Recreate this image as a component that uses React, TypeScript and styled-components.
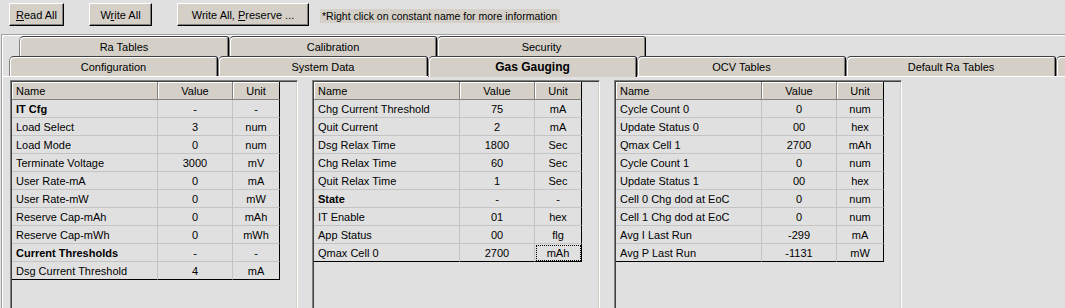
import styled, { createGlobalStyle } from "styled-components";

const GlobalStyle = createGlobalStyle`
    html, body {
        margin: 0;
        background: #e0e0e0;
    }
    body {
        font-family: "Liberation Sans", Arial, sans-serif;
        font-size: 11px;
        color: #000;
    }
`;

const Screen = styled.div`
    width: 1065px;
    height: 308px;
    overflow: hidden;
    background: #e0e0e0;
`;

const Toolbar = styled.div`
    box-sizing: border-box;
    height: 34px;
    padding: 3px 0 0 9px;
    display: flex;
    align-items: flex-start;
`;

const ButtonGroup = styled.div`
    display: flex;
    gap: 25px;
`;

const Button = styled.button<{ $w: number }>`
    box-sizing: border-box;
    width: ${(p) => p.$w}px;
    height: 23px;
    padding: 0;
    background: #d4d0c8;
    border: 1px solid;
    border-color: #fff #000 #000 #fff;
    box-shadow: inset -1px -1px #808080;
    font-family: "Liberation Sans", Arial, sans-serif;
    font-size: 11px;
    color: #000;
`;

const Note = styled.div`
    margin: 6px 0 0 11px;
    height: 14px;
    line-height: 14px;
    padding: 0 3px 0 2px;
    background: #d4d0c8;
    font-size: 10.5px;
`;

const Frame = styled.div`
    margin-left: 1px;
    padding: 1px 0 0 1px;
    border-top: 1px solid #a0a0a0;
    border-left: 1px solid #a0a0a0;
    box-shadow: inset 1px 1px #fff;
`;

const TabRow = styled.div<{ $indent: number }>`
    display: flex;
    align-items: flex-end;
    height: 20px;
    padding-left: ${(p) => p.$indent}px;
    position: relative;
    z-index: 1;
`;

const Tab = styled.div<{ $w: number; $active?: boolean }>`
    box-sizing: border-box;
    flex: none;
    width: ${(p) => p.$w}px;
    height: ${(p) => (p.$active ? 21 : 20)}px;
    margin-bottom: ${(p) => (p.$active ? -1 : 0)}px;
    display: flex;
    align-items: center;
    justify-content: center;
    padding-bottom: ${(p) => (p.$active ? 1 : 0)}px;
    background: #d4d0c8;
    border-top: 1px solid #404040;
    border-left: 1px solid #808080;
    border-right: 1px solid #000;
    border-radius: 5px 3px 0 0;
    box-shadow: inset 1px 1px #fff, inset -1px 0 #808080;
    font-size: ${(p) => (p.$active ? 12 : 11)}px;
    font-weight: ${(p) => (p.$active ? 700 : 400)};
    white-space: nowrap;
`;

const Page = styled.div`
    border-top: 1px solid #fff;
    padding: 3px 0 0 7px;
    display: flex;
    gap: 14px;
`;

const Panel = styled.div`
    box-sizing: border-box;
    flex: none;
    width: 288px;
    height: 240px;
    padding: 1px;
    border: 1px solid;
    border-color: #808080 #fff #fff #808080;
    box-shadow: inset 1px 1px #404040, inset -1px -1px #d4d0c8;
`;

const Grid = styled.div`
    display: grid;
    grid-template-columns: 146px 75px 47px;
    grid-auto-rows: 18px;
`;

const HeadCell = styled.div<{ $align: "left" | "center"; $last?: boolean }>`
    box-sizing: border-box;
    display: flex;
    align-items: center;
    justify-content: ${(p) => (p.$align === "left" ? "flex-start" : "center")};
    padding-left: ${(p) => (p.$align === "left" ? 4 : 0)}px;
    background: #d4d0c8;
    border-right: 1px solid ${(p) => (p.$last ? "#000" : "#808080")};
    border-bottom: 1px solid #808080;
    box-shadow: inset 1px 1px #fff;
`;

const Cell = styled.div<{
    $align: "left" | "center";
    $bold?: boolean;
    $last?: boolean;
    $bottom?: boolean;
    $focus?: boolean;
}>`
    box-sizing: border-box;
    display: flex;
    align-items: center;
    justify-content: ${(p) => (p.$align === "left" ? "flex-start" : "center")};
    padding-left: ${(p) => (p.$align === "left" ? 4 : 0)}px;
    border-right: 1px solid ${(p) => (p.$last ? "#000" : "#c4c4c4")};
    border-bottom: 1px solid ${(p) => (p.$bottom ? "#000" : "#c4c4c4")};
    font-weight: ${(p) => (p.$bold ? 700 : 400)};
    white-space: nowrap;
    outline: ${(p) => (p.$focus ? "1px dotted #000" : "none")};
    outline-offset: -2px;
`;

type Row = { name: string; value: string; unit: string; bold?: boolean };

const gauging: Row[] = [
    { name: "IT Cfg", value: "-", unit: "-", bold: true },
    { name: "Load Select", value: "3", unit: "num" },
    { name: "Load Mode", value: "0", unit: "num" },
    { name: "Terminate Voltage", value: "3000", unit: "mV" },
    { name: "User Rate-mA", value: "0", unit: "mA" },
    { name: "User Rate-mW", value: "0", unit: "mW" },
    { name: "Reserve Cap-mAh", value: "0", unit: "mAh" },
    { name: "Reserve Cap-mWh", value: "0", unit: "mWh" },
    { name: "Current Thresholds", value: "-", unit: "-", bold: true },
    { name: "Dsg Current Threshold", value: "4", unit: "mA" },
];

const thresholds: Row[] = [
    { name: "Chg Current Threshold", value: "75", unit: "mA" },
    { name: "Quit Current", value: "2", unit: "mA" },
    { name: "Dsg Relax Time", value: "1800", unit: "Sec" },
    { name: "Chg Relax Time", value: "60", unit: "Sec" },
    { name: "Quit Relax Time", value: "1", unit: "Sec" },
    { name: "State", value: "-", unit: "-", bold: true },
    { name: "IT Enable", value: "01", unit: "hex" },
    { name: "App Status", value: "00", unit: "flg" },
    { name: "Qmax Cell 0", value: "2700", unit: "mAh" },
];

const state: Row[] = [
    { name: "Cycle Count 0", value: "0", unit: "num" },
    { name: "Update Status 0", value: "00", unit: "hex" },
    { name: "Qmax Cell 1", value: "2700", unit: "mAh" },
    { name: "Cycle Count 1", value: "0", unit: "num" },
    { name: "Update Status 1", value: "00", unit: "hex" },
    { name: "Cell 0 Chg dod at EoC", value: "0", unit: "num" },
    { name: "Cell 1 Chg dod at EoC", value: "0", unit: "num" },
    { name: "Avg I Last Run", value: "-299", unit: "mA" },
    { name: "Avg P Last Run", value: "-1131", unit: "mW" },
];

function ConstTable({ rows, focusLast }: { rows: Row[]; focusLast?: boolean }) {
    return (
        <Panel>
            <Grid>
                <HeadCell $align="left">Name</HeadCell>
                <HeadCell $align="center">Value</HeadCell>
                <HeadCell $align="center" $last>
                    Unit
                </HeadCell>
                {rows.map((r, i) => {
                    const bottom = i === rows.length - 1;
                    return [
                        <Cell key={r.name + "n"} $align="left" $bold={r.bold} $bottom={bottom}>
                            {r.name}
                        </Cell>,
                        <Cell key={r.name + "v"} $align="center" $bottom={bottom}>
                            {r.value}
                        </Cell>,
                        <Cell
                            key={r.name + "u"}
                            $align="center"
                            $last
                            $bottom={bottom}
                            $focus={focusLast && bottom}
                        >
                            {r.unit}
                        </Cell>,
                    ];
                })}
            </Grid>
        </Panel>
    );
}

export default function App() {
    return (
        <Screen>
            <GlobalStyle />
            <Toolbar>
                <ButtonGroup>
                    <Button $w={55}>
                        <u>R</u>ead All
                    </Button>
                    <Button $w={63}>
                        W<u>r</u>ite All
                    </Button>
                    <Button $w={132}>
                        Write All, <u>P</u>reserve ...
                    </Button>
                </ButtonGroup>
                <Note>*Right click on constant name for more information</Note>
            </Toolbar>

            <Frame>
                <TabRow $indent={16}>
                    <Tab $w={210}>Ra Tables</Tab>
                    <Tab $w={208}>Calibration</Tab>
                    <Tab $w={209}>Security</Tab>
                </TabRow>
                <TabRow $indent={6}>
                    <Tab $w={209}>Configuration</Tab>
                    <Tab $w={210}>System Data</Tab>
                    <Tab $w={209} $active>
                        Gas Gauging
                    </Tab>
                    <Tab $w={209}>OCV Tables</Tab>
                    <Tab $w={210}>Default Ra Tables</Tab>
                    <Tab $w={209} />
                </TabRow>
                <Page>
                    <ConstTable rows={gauging} />
                    <ConstTable rows={thresholds} focusLast />
                    <ConstTable rows={state} />
                </Page>
            </Frame>
        </Screen>
    );
}
